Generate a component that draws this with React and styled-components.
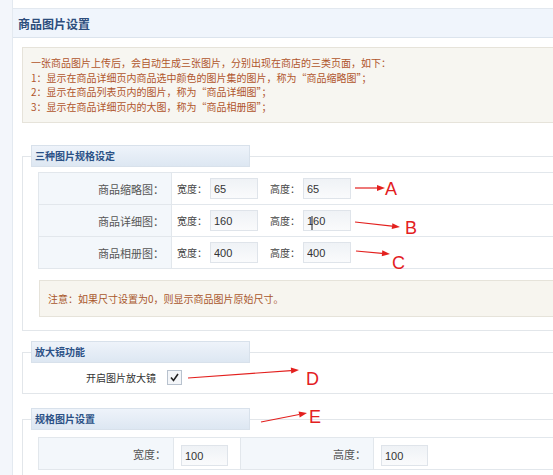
import React from "react";
import styled, { createGlobalStyle } from "styled-components";

const Global = createGlobalStyle`
  html, body { margin: 0; padding: 0; background: #fff; }
  body {
    font-family: "Noto Sans CJK SC", "Liberation Sans", sans-serif;
    overflow: hidden;
  }
  * { box-sizing: border-box; }
`;

const Page = styled.div`
  position: relative;
  display: flex;
  width: 553px;
  height: 475px;
  overflow: hidden;
  background: #fff;
`;

const Side = styled.div`
  flex: none;
  width: 13px;
  background: #f3f6fb;
  border-right: 1px solid #e3e9f0;
`;

const Main = styled.div`
  flex: none;
  width: 640px;
  padding-top: 8px;
`;

const Header = styled.div`
  height: 30px;
  display: flex;
  align-items: center;
  padding-left: 5px;
  border-top: 1px solid #e2e8ef;
  border-bottom: 1px solid #dce4ed;
  background: #f0f5fc;
  font-size: 12px;
  font-weight: bold;
  color: #2d4d7c;
`;

const Body = styled.div`
  padding: 9px 0 0 9px;
`;

const InfoBox = styled.div`
  border: 1px solid #e6e3da;
  background: #f7f6f1;
  padding: 8px 8px 8px;
  font-size: 10px;
  line-height: 14.5px;
  color: #b0552c;
`;

const Fieldset = styled.fieldset`
  margin: ${(p) => p.$mt}px 0 0 0;
  padding: 0 0 ${(p) => p.$pb}px 0;
  min-width: 0;
  border: 1px solid #e2e6ea;
`;

const Legend = styled.legend`
  margin-left: 8px;
  padding: 0 3px;
  width: 219px;
  height: 22px;
  line-height: 20px;
  font-size: 10px;
  font-weight: bold;
  color: #2b5186;
  background: linear-gradient(#eef3fa, #dde7f2);
  border: 1px solid #d8e1eb;
`;

const Inner = styled.div`
  padding-left: 15px;
  padding-top: ${(p) => p.$pt || 0}px;
`;

const Table = styled.table`
  border-collapse: collapse;
  width: 580px;
`;

const LabelCell = styled.td`
  width: ${(p) => p.$w}px;
  height: 32px;
  padding: 0 7px 0 0;
  text-align: right;
  background: #f3f7fb;
  border: 1px solid #e2e7ec;
  font-size: 11px;
  color: #555;
  white-space: nowrap;
`;

const ValueCell = styled.td`
  width: ${(p) => (p.$w ? `${p.$w}px` : "auto")};
  height: 32px;
  padding: 0 0 0 ${(p) => p.$pl}px;
  background: #fff;
  border: 1px solid #e2e7ec;
`;

const Fields = styled.div`
  display: flex;
  align-items: center;
`;

const SmallLabel = styled.span`
  font-size: 10px;
  color: #444;
  margin-left: ${(p) => p.$ml || 0}px;
  margin-right: 3px;
  white-space: nowrap;
`;

const Input = styled.input`
  width: ${(p) => p.$w}px;
  height: 21px;
  padding: 0 3px;
  border: 1px solid #dfe4ea;
  background: linear-gradient(#eff2f6, #fafbfc);
  font-family: "Liberation Sans", Arial, sans-serif;
  font-size: 11px;
  color: #333;
  outline: none;
`;

const NoteBox = styled.div`
  margin: 11px 0 0 1px;
  height: 37px;
  display: flex;
  align-items: center;
  padding-left: 8px;
  border: 1px solid #e6e3da;
  background: #f7f5ef;
  font-size: 10px;
  color: #a9572c;
`;

const CheckRow = styled.div`
  display: flex;
  align-items: center;
  height: 15px;
`;

const CheckLabel = styled.span`
  width: 118px;
  text-align: right;
  font-size: 10px;
  color: #333;
  margin-right: 11px;
`;

const CheckBox = styled.span`
  width: 15px;
  height: 15px;
  border: 1px solid #b8c2ce;
  background: #f4f6f9;
  display: flex;
  align-items: center;
  justify-content: center;
`;

const Overlay = styled.svg`
  position: absolute;
  left: 0;
  top: 0;
  width: 553px;
  height: 475px;
  pointer-events: none;
`;

const RED = "#e3201e";

function Arrow({ x1, y1, x2, y2 }) {
  const dx = x2 - x1;
  const dy = y2 - y1;
  const len = Math.hypot(dx, dy);
  const ux = dx / len;
  const uy = dy / len;
  const hl = 8;
  const hw = 3;
  const bx = x2 - ux * hl;
  const by = y2 - uy * hl;
  const p = `${x2},${y2} ${bx - uy * hw},${by + ux * hw} ${bx + uy * hw},${by - ux * hw}`;
  return (
    <g>
      <line x1={x1} y1={y1} x2={bx} y2={by} stroke={RED} strokeWidth="1.2" />
      <polygon points={p} fill={RED} />
    </g>
  );
}

const sizes = [
  { name: "商品缩略图：", w: "65", h: "65" },
  { name: "商品详细图：", w: "160", h: "160" },
  { name: "商品相册图：", w: "400", h: "400" },
];

export default function App() {
  return (
    <>
      <Global />
      <Page>
        <Side />
        <Main>
          <Header>商品图片设置</Header>
          <Body>
            <InfoBox>
              <div>一张商品图片上传后，会自动生成三张图片，分别出现在商店的三类页面，如下：</div>
              <div>1：显示在商品详细页内商品选中颜色的图片集的图片，称为“商品缩略图”；</div>
              <div>2：显示在商品列表页内的图片，称为“商品详细图”；</div>
              <div>3：显示在商品详细页内的大图，称为“商品相册图”；</div>
            </InfoBox>

            <Fieldset $mt={22} $pb={13}>
              <Legend>三种图片规格设定</Legend>
              <Inner $pt={5}>
                <Table>
                  <tbody>
                    {sizes.map((s) => (
                      <tr key={s.name}>
                        <LabelCell $w={133}>{s.name}</LabelCell>
                        <ValueCell $pl={5}>
                          <Fields>
                            <SmallLabel>宽度：</SmallLabel>
                            <Input $w={48} value={s.w} readOnly />
                            <SmallLabel $ml={12}>高度：</SmallLabel>
                            <Input $w={48} value={s.h} readOnly />
                          </Fields>
                        </ValueCell>
                      </tr>
                    ))}
                  </tbody>
                </Table>
                <NoteBox>注意：如果尺寸设置为0，则显示商品图片原始尺寸。</NoteBox>
              </Inner>
            </Fieldset>

            <Fieldset $mt={10} $pb={8}>
              <Legend>放大镜功能</Legend>
              <Inner $pt={7}>
                <CheckRow>
                  <CheckLabel>开启图片放大镜</CheckLabel>
                  <CheckBox>
                    <svg width="9" height="9" viewBox="0 0 9 9">
                      <path d="M1 4.5 L3.5 7.5 L8 1" fill="none" stroke="#222" strokeWidth="1.6" />
                    </svg>
                  </CheckBox>
                </CheckRow>
              </Inner>
            </Fieldset>

            <Fieldset $mt={14} $pb={10}>
              <Legend>规格图片设置</Legend>
              <Inner $pt={7}>
                <Table>
                  <tbody>
                    <tr>
                      <LabelCell $w={135}>宽度：</LabelCell>
                      <ValueCell $w={67} $pl={7}>
                        <Input $w={47} value="100" readOnly />
                      </ValueCell>
                      <LabelCell $w={133}>高度：</LabelCell>
                      <ValueCell $pl={7}>
                        <Input $w={47} value="100" readOnly />
                      </ValueCell>
                    </tr>
                  </tbody>
                </Table>
              </Inner>
            </Fieldset>
          </Body>
        </Main>

        <Overlay viewBox="0 0 553 475">
          <Arrow x1={355} y1={188} x2={385} y2={188} />
          <Arrow x1={355} y1={222} x2={400} y2={227} />
          <Arrow x1={356} y1={251} x2={390} y2={254} />
          <Arrow x1={188} y1={378} x2={299} y2={370} />
          <Arrow x1={261} y1={422} x2={307} y2={413} />
          <line x1="312" y1="216" x2="312" y2="230" stroke="#222" strokeWidth="1" />
          <g fill={RED} fontFamily="Liberation Sans, Arial, sans-serif" fontSize="18">
            <text x="385" y="195">A</text>
            <text x="405" y="234">B</text>
            <text x="392" y="269">C</text>
            <text x="306" y="385">D</text>
            <text x="309" y="423">E</text>
          </g>
        </Overlay>
      </Page>
    </>
  );
}
